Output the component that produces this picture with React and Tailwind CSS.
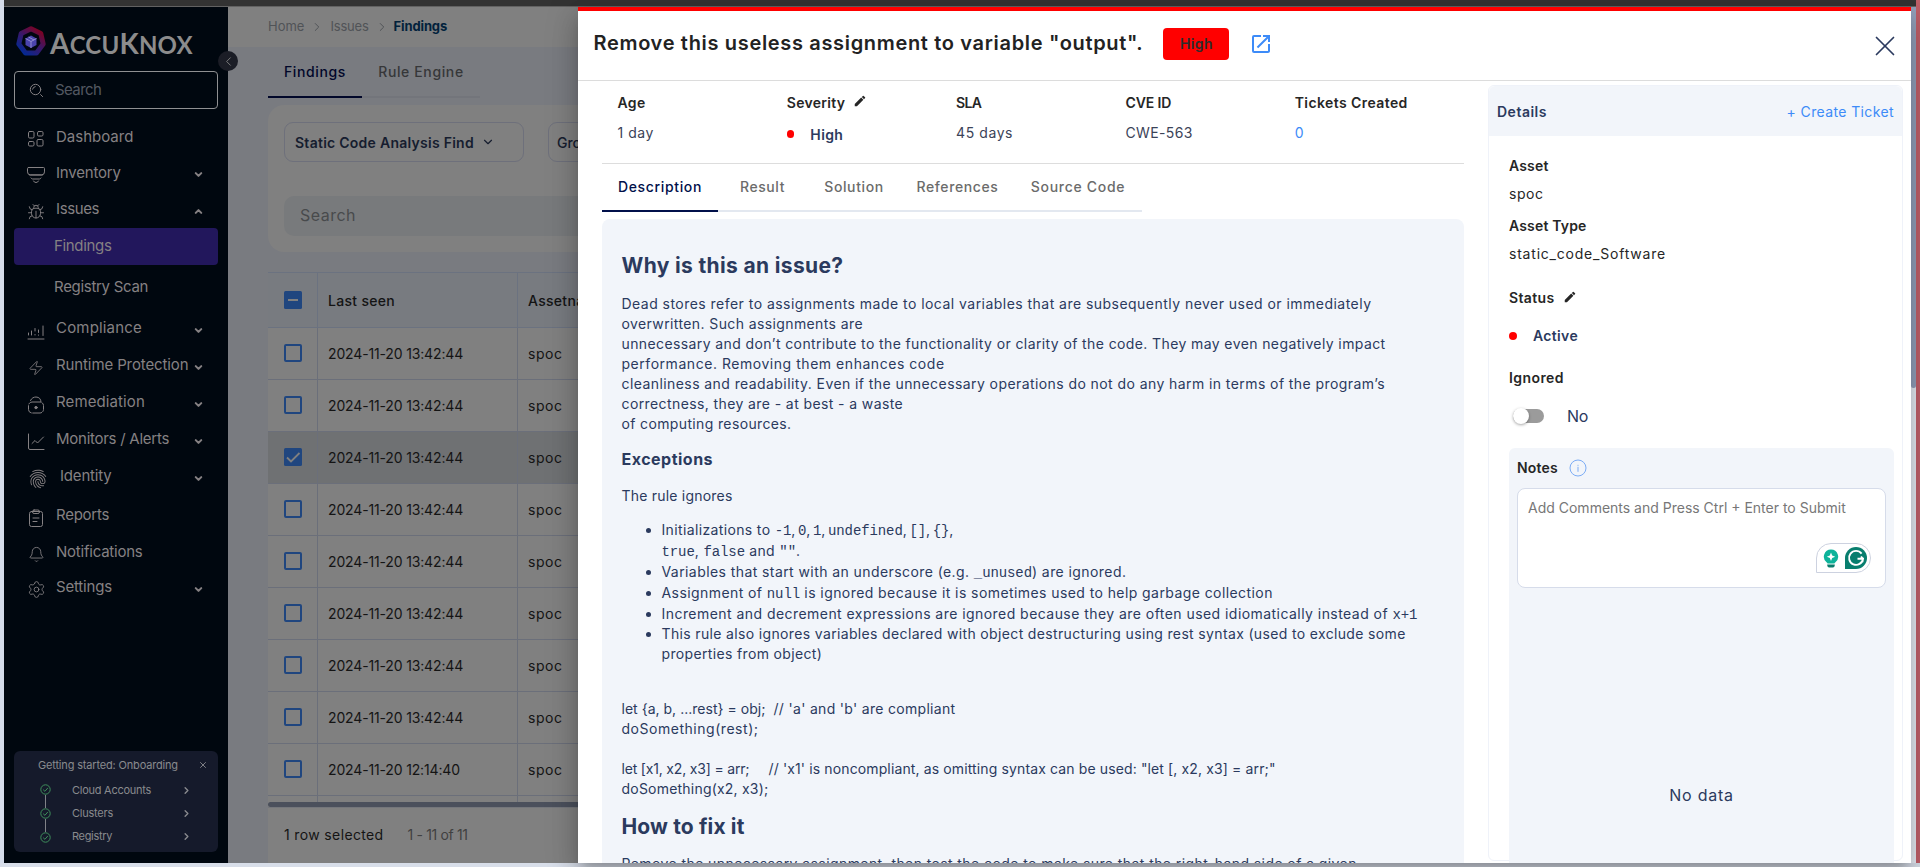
import React from "react";
import { Bell, Bug, ChevronDown, ChevronLeft, ChevronRight, ChevronUp, Settings, X, Zap } from "lucide-react";
import { MdEdit, MdFingerprint, MdOpenInNew } from "react-icons/md";

/* ---------- sidebar icons ---------- */

function Glyph({ children, size = 18 }) {
  return (
    <svg width={size} height={size} viewBox="0 0 18 18" fill="none" stroke="currentColor" strokeWidth="1" strokeLinecap="round" strokeLinejoin="round">
      {children}
    </svg>
  );
}

const SearchGlyph = () => (
  <svg width="15" height="15" viewBox="0 0 15 15" fill="none" stroke="currentColor" strokeWidth="1" strokeLinecap="round">
    <circle cx="6.5" cy="6.5" r="5.2" />
    <path d="M3.6 6.2a3 3 0 0 1 2.6-2.6M11.6 11.6l2 2" />
  </svg>
);

const DashboardGlyph = () => (
  <Glyph>
    <rect x="1.5" y="1.5" width="5.5" height="6.5" rx="1.2" />
    <rect x="10.5" y="1.5" width="5.5" height="4.5" rx="1.2" />
    <rect x="1.5" y="11.5" width="5.5" height="4.5" rx="1.2" />
    <rect x="10" y="9.5" width="6" height="6.5" rx="1.2" />
  </Glyph>
);

const InventoryGlyph = () => (
  <Glyph>
    <path d="M1.500 1.500h15q1 0 1 1v3.400q0 3-3 3h-11q-3 0-3-3V2.500q0-1 1-1Z" />
    <path d="M2.500 9h13M4 12q.6 1 1.600 1h6.800q1 0 1.600-1M6.500 15q.6 1.500 2.500 1.500t2.500-1.500" />
  </Glyph>
);

const ComplianceGlyph = () => (
  <Glyph>
    <path d="M1.500 11v2M4.500 9v4M8 6.500v2.500M8 12.500v.5M11.500 8v2.500M11.500 13v.2M16 4v9.500" />
    <path d="M1 17h16" />
  </Glyph>
);

const LockGlyph = () => (
  <Glyph>
    <path d="M3.500 4.500C4.500 2 7 1 9 1c3.200 0 5 2.200 5 5" />
    <rect x="1.500" y="6" width="15" height="11" rx="3.500" strokeDasharray="9 1.500" />
    <circle cx="9" cy="11.600" r="1.200" fill="currentColor" />
  </Glyph>
);

const ChartGlyph = () => (
  <Glyph>
    <path d="M1.500 1v14q0 1.500 1.500 1.500h14" />
    <path d="M5 10.500 8 7.500l2.500 2.500 6-6" />
  </Glyph>
);

const ClipboardGlyph = () => (
  <Glyph>
    <rect x="2.500" y="2.500" width="13" height="15" rx="2" />
    <rect x="5.500" y="1" width="7" height="3.500" rx="1.600" />
    <path d="M6 9h6M6 12.500h4" />
  </Glyph>
);

const ICON = { size: 18, strokeWidth: 1.25 };

const NAV = [
  { label: "Dashboard", h: "h-[36px]", tr: "", icon: <DashboardGlyph /> },
  { label: "Inventory", h: "h-[36px]", tr: "tracking-[-0.2px]", icon: <InventoryGlyph />, caret: "down" },
  { label: "Issues", h: "h-[37px]", tr: "tracking-[-0.4px]", icon: <Bug {...ICON} />, caret: "up" },
  { label: "Findings", h: "h-[37px]", tr: "tracking-[-0.33px]", child: true, active: true },
  { label: "Registry Scan", h: "h-[45px]", tr: "tracking-[-0.3px]", child: true },
  { label: "Compliance", h: "h-[37px]", tr: "tracking-[0.18px]", icon: <ComplianceGlyph />, caret: "down" },
  { label: "Runtime Protection", h: "h-[37px]", tr: "tracking-[-0.11px]", icon: <Zap size={16} strokeWidth={1.25} />, caret: "down" },
  { label: "Remediation", h: "h-[37px]", tr: "tracking-[0.11px]", icon: <LockGlyph />, caret: "down" },
  { label: "Monitors / Alerts", h: "h-[37px]", tr: "tracking-[-0.26px]", icon: <ChartGlyph />, caret: "down" },
  { label: "Identity", h: "h-[37px]", tr: "tracking-[-0.18px]", wide: true, icon: <MdFingerprint size={22} className="shrink-0" />, caret: "down" },
  { label: "Reports", h: "h-[41px]", tr: "tracking-[-0.27px]", icon: <ClipboardGlyph /> },
  { label: "Notifications", h: "h-[33px]", tr: "tracking-[-0.23px]", icon: <Bell size={17} strokeWidth={1.25} /> },
  { label: "Settings", h: "h-[37px]", tr: "tracking-[-0.18px]", icon: <Settings size={19} strokeWidth={1.1} />, caret: "down" },
];

function NavRow({ item }) {
  if (item.child) {
    return (
      <div className={`flex items-center rounded pl-[40px] ${item.h} ${item.tr} ${item.active ? "bg-[#22175c]" : ""}`}>
        {item.label}
      </div>
    );
  }
  return (
    <div className={`flex items-center pl-[12px] pr-[14px] ${item.h} ${item.tr}`}>
      <span className={`mt-1 flex w-5 shrink-0 items-center justify-center ${item.wide ? "mr-[12px] ml-[2px]" : "mr-[10px]"}`}>{item.icon}</span>
      <span className="flex-1 whitespace-nowrap">{item.label}</span>
      {item.caret === "down" && <ChevronDown size={11} strokeWidth={4.500} className="mt-[3px]" />}
      {item.caret === "up" && <ChevronUp size={11} strokeWidth={4.500} className="mt-[3px]" />}
    </div>
  );
}

function Logo() {
  return (
    <div className="flex h-[58px] items-center pl-[2px]">
      <svg width="30" height="31" viewBox="0 0 30 31" fill="none">
        <defs>
          <linearGradient id="ring" x1="24" y1="2" x2="5" y2="27" gradientUnits="userSpaceOnUse">
            <stop offset="0" stopColor="#85001a" />
            <stop offset=".5" stopColor="#3a1768" />
            <stop offset="1" stopColor="#002a96" />
          </linearGradient>
        </defs>
        <path d="M15 2.800 24.800 7.500 27.200 18 20.500 27H9.500L2.800 18 5.200 7.500Z" stroke="url(#ring)" strokeWidth="5" strokeLinejoin="round" />
        <path d="m15 9.500 5.500 3v6.500L15 22l-5.500-3v-6.500Z" fill="#4a44ad" />
        <path d="m9.500 12.500 5.500 3 5.500-3M15 15.500V22M12.500 11l5.500 3" stroke="#a5a0d8" strokeWidth=".8" />
      </svg>
      <div className="mt-[3px] ml-[4px] flex items-baseline font-['Lato',sans-serif] text-[24px] leading-none font-bold tracking-[0.2px] text-[#8c8c8c]">
        <span className="text-[28px]">A</span>
        <span>CCU</span>
        <span className="text-[28px]">K</span>
        <span>NOX</span>
      </div>
    </div>
  );
}

function CheckRing() {
  return (
    <svg width="11" height="11" viewBox="0 0 11 11" fill="none" stroke="#3f8f5c" strokeWidth="1" className="shrink-0">
      <circle cx="5.500" cy="5.500" r="4.700" />
      <path d="m3.200 5.700 1.700 1.600 3-3.400" />
    </svg>
  );
}

function Onboarding() {
  const steps = [
    ["Cloud Accounts", "tracking-[-0.26px]"],
    ["Clusters", "tracking-[-0.23px]"],
    ["Registry", "tracking-[-0.33px]"],
  ];
  return (
    <div className="mb-[11px] h-[101px] rounded-md bg-[#151a2b] px-[15px] pt-[5px] text-[11px] text-[#898a8e]">
      <div className="-mr-[5px] flex h-[18px] items-center justify-between pl-[9px] tracking-[-0.17px]">
        Getting started: Onboarding
        <X size={10} strokeWidth={2.200} />
      </div>
      <div className="mt-[5px] flex">
        <div className="ml-[11px] flex flex-col items-center pt-[5px]">
          <CheckRing />
          <span className="h-[13px] w-px bg-[#808288]" />
          <CheckRing />
          <span className="h-[13px] w-px bg-[#808288]" />
          <CheckRing />
        </div>
        <div className="ml-[21px] flex-1">
          {steps.map(([label, tr]) => (
            <div key={label} className={`flex h-[23px] items-center justify-between pr-[11px] ${tr}`}>
              {label}
              <ChevronRight size={11} strokeWidth={3} />
            </div>
          ))}
        </div>
      </div>
    </div>
  );
}

function Sidebar() {
  return (
    <aside className="relative flex w-[224px] shrink-0 flex-col bg-[#00070f] px-[10px] pt-[5px] text-[15px] text-[#858183]">
      <Logo />
      <div className="mt-[1px] flex h-[38px] items-center rounded border border-[#8f9092] pl-[14px]">
        <SearchGlyph />
        <span className="ml-[11px] tracking-[-0.6px] text-[#535861]">Search</span>
      </div>
      <nav className="mt-[10px] flex-1">
        {NAV.map((item) => (
          <NavRow key={item.label} item={item} />
        ))}
      </nav>
      <Onboarding />
      <button className="absolute top-[44px] -right-[10px] z-10 flex size-5 items-center justify-center rounded-full bg-[#1b1d26] text-[#808080]">
        <ChevronLeft size={15} strokeWidth={1.500} />
      </button>
    </aside>
  );
}

/* ---------- findings table behind the drawer ---------- */

function Checkbox({ state }) {
  if (state) {
    return (
      <svg width="18" height="18" viewBox="0 0 18 18" fill="none">
        <rect width="18" height="18" rx="1.500" fill="#20467f" />
        {state === "some" ? (
          <path d="M4 9h10" stroke="#808080" strokeWidth="2" />
        ) : (
          <path d="m3 9.500 4 4 8.500-8.500" stroke="#808080" strokeWidth="1.800" />
        )}
      </svg>
    );
  }
  return <span className="size-[18px] rounded-[2px] border-2 border-[#20467f]" />;
}

const ROWS = [
  "2024-11-20 13:42:44",
  "2024-11-20 13:42:44",
  "2024-11-20 13:42:44",
  "2024-11-20 13:42:44",
  "2024-11-20 13:42:44",
  "2024-11-20 13:42:44",
  "2024-11-20 13:42:44",
  "2024-11-20 13:42:44",
  "2024-11-20 12:14:40",
];

function Main() {
  return (
    <main className="flex w-[350px] shrink-0 flex-col overflow-hidden bg-[#797b80] whitespace-nowrap">
      <div className="flex h-[40px] items-center bg-[#808080] pl-[40px] text-[13px] text-[#505357]">
        <span>Home</span>
        <ChevronRight size={14} strokeWidth={1.700} className="mx-[6px]" />
        <span className="tracking-[-0.2px]">Issues</span>
        <ChevronRight size={14} strokeWidth={1.700} className="mr-[5px] ml-[6px]" />
        <span className="font-bold tracking-[-0.13px] text-[#02223c]">Findings</span>
      </div>

      <div className="ml-[40px] flex h-[51px] w-[212px] border-b-2 border-[#73757b] text-[14px] font-medium tracking-[0.62px]">
        <div className="box-content flex h-[49px] w-[94px] items-center justify-center border-b-2 border-[#01072a] text-[#01072a]">Findings</div>
        <div className="flex h-[49px] flex-1 items-center justify-center text-[#363739]">Rule Engine</div>
      </div>

      <div className="mt-[7px] ml-[40px] h-[147px] rounded-l-2xl bg-[#808080] pt-[17px] pl-[16px]">
        <div className="flex gap-[24px]">
          <div className="flex h-[40px] w-[240px] shrink-0 items-center rounded-[9px] border border-[#6e707b] pl-[10px] text-[14px] font-semibold tracking-[0.26px] text-[#161d2f]">
            Static Code Analysis Find
            <ChevronDown size={14} strokeWidth={2} className="ml-[7px]" />
          </div>
          <div className="flex h-[40px] w-[240px] shrink-0 items-center rounded-[9px] border border-[#6e707b] pl-[8px] text-[14px] font-medium text-[#161d2f]">
            Group by
          </div>
        </div>
        <div className="mt-[34px] flex h-[40px] items-center rounded-l-[10px] bg-[#787a7c] pb-[2px] pl-[16px] text-[16px] tracking-[0.48px] text-[#484a4c]">Search</div>
      </div>

      <div className="mt-[20px] ml-[40px] flex flex-1 flex-col bg-[#808080] text-[14px] text-[#141414]">
        <div className="flex h-[56px] w-[400px] border-y border-[#6b7280] bg-[#787b80] font-medium">
          <div className="flex w-[50px] shrink-0 items-center border-r border-[#6b7280] pl-[16px]"><Checkbox state="some" /></div>
          <div className="flex w-[200px] shrink-0 items-center border-r border-[#6b7280] pl-[10px] tracking-[0.3px]">Last seen</div>
          <div className="flex items-center pl-[10px] tracking-[0.3px]">Assetname</div>
        </div>
        {ROWS.map((seen, i) => (
          <div key={i} className={`flex h-[52px] border-b border-[#6b6f7a] ${i === 2 ? "bg-[#6f7173]" : ""}`}>
            <div className="flex w-[50px] items-center border-r border-[#6b6f7a] pb-[1px] pl-[16px]"><Checkbox state={i === 2 ? "all" : ""} /></div>
            <div className="flex w-[200px] items-center border-r border-[#6b6f7a] pb-[1px] pl-[10px] tracking-[-0.15px]">{seen}</div>
            <div className="flex items-center pb-[1px] pl-[10px] tracking-[0.54px]">spoc</div>
          </div>
        ))}
        <div className="flex h-[6px]">
          <div className="w-[50px] border-r border-[#6b6f7a]" />
          <div className="w-[200px] border-r border-[#6b6f7a]" />
        </div>
        <div className="h-[5px] rounded-l bg-[#4b505c]" />
        <div className="flex flex-1 items-center border-t border-[#74767b] pb-[2px] pl-[16px]">
          <span className="tracking-[0.36px]">1 row selected</span>
          <span className="ml-[24px] tracking-[-0.35px] text-[#404040]">1 - 11 of 11</span>
        </div>
      </div>
    </main>
  );
}

/* ---------- drawer ---------- */

function Stat({ label, tr, children }) {
  return (
    <div className="w-[169.300px]">
      <div className={`flex h-[20px] items-center font-semibold text-[#262626] ${tr}`}>{label}</div>
      <div className="mt-[10px] flex h-[20px] items-center text-[#3b4358]">{children}</div>
    </div>
  );
}

const Code = ({ children }) => <code className="font-['Liberation_Mono',monospace] text-[14px] leading-[0] tracking-[-0.1px]">{children}</code>;

function Description() {
  return (
    <div className="mt-[7px] flex-1 overflow-hidden rounded-t-lg bg-[#f2f5fa] pt-[31px] pl-[19.500px] text-[14px] leading-[20px] whitespace-nowrap text-[#2b3a5e]">
      <h2 className="text-[21px] leading-[32px] font-bold tracking-[0.35px]">Why is this an issue?</h2>
      <div className="mt-[12px]">
        <p className="tracking-[0.465px]">Dead stores refer to assignments made to local variables that are subsequently never used or immediately</p>
        <p className="tracking-[0.39px]">overwritten. Such assignments are</p>
        <p className="tracking-[0.393px]">unnecessary and don’t contribute to the functionality or clarity of the code. They may even negatively impact</p>
        <p className="tracking-[0.54px]">performance. Removing them enhances code</p>
        <p className="tracking-[0.421px]">cleanliness and readability. Even if the unnecessary operations do not do any harm in terms of the program’s</p>
        <p className="tracking-[0.4px]">correctness, they are - at best - a waste</p>
        <p className="tracking-[0.36px]">of computing resources.</p>
      </div>
      <h3 className="mt-[13px] text-[16px] leading-[24px] font-bold tracking-[0.49px]">Exceptions</h3>
      <p className="mt-[15px] tracking-[0.21px]">The rule ignores</p>
      <ul className="mt-[13px] list-disc pl-[40px] leading-[21px] tracking-[0.36px]">
        <li>
          Initializations to{" "}
          <span className="tracking-[-0.4px] [word-spacing:-0.5px]">
            <Code>-1</Code>, <Code>0</Code>, <Code>1</Code>, <Code>undefined</Code>, <Code>[]</Code>, <Code>{"{}"}</Code>,
          </span>
          <br />
          <Code>true</Code>, <Code>false</Code> and <Code>""</Code>.
        </li>
        <li className="tracking-[0.42px]">Variables that start with an underscore (e.g. <Code>_unused</Code>) are ignored.</li>
        <li className="tracking-[0.42px]">Assignment of <Code>null</Code> is ignored because it is sometimes used to help garbage collection</li>
        <li className="tracking-[0.45px]">Increment and decrement expressions are ignored because they are often used idiomatically instead of <Code>x+1</Code></li>
        <li className="leading-[20px] tracking-[0.35px]">
          This rule also ignores variables declared with object destructuring using rest syntax (used to exclude some
          <br />
          properties from object)
        </li>
      </ul>
      <div className="mt-[35px] whitespace-pre">
        <p className="flex"><span className="w-[152px] tracking-[0.02px]">{"let {a, b, ...rest} = obj;"}</span><span className="tracking-[0.31px]">// 'a' and 'b' are compliant</span></p>
        <p className="tracking-[0.53px]">doSomething(rest);</p>
        <p className="mt-[20px] flex"><span className="w-[147px] tracking-[-0.18px]">let [x1, x2, x3] = arr;</span><span className="tracking-[0.127px]">// 'x1' is noncompliant, as omitting syntax can be used: "let [, x2, x3] = arr;"</span></p>
        <p className="tracking-[0.21px]">doSomething(x2, x3);</p>
      </div>
      <h2 className="mt-[12px] text-[21px] leading-[32px] font-bold tracking-[0.14px]">How to fix it</h2>
      <p className="mt-[11px] tracking-[0.42px]">Remove the unnecessary assignment, then test the code to make sure that the right-hand side of a given</p>
    </div>
  );
}

const TABS = [
  ["Description", "w-[116px] tracking-[0.65px] border-[#01104a] text-[#01104a]"],
  ["Result", "w-[89px] tracking-[0.57px] border-[#e3e8f0] text-[#6b6b6b]"],
  ["Solution", "w-[94px] tracking-[0.61px] border-[#e3e8f0] text-[#6b6b6b]"],
  ["References", "w-[113px] tracking-[0.61px] border-[#e3e8f0] text-[#6b6b6b]"],
  ["Source Code", "w-[128px] tracking-[0.7px] border-[#e3e8f0] text-[#6b6b6b]"],
];

function GrammarBadge() {
  return (
    <div className="flex h-[30px] w-[55px] items-center justify-center gap-[6px] rounded-[15px] rounded-bl-none border border-[#cdd2e0] bg-white pl-[2px]">
      <svg width="16" height="19" viewBox="0 0 16 19">
        <path d="M8 .5a7.200 7.200 0 0 1 4.200 13c-.5.400-.7.500-.7 1h-7c0-.5-.2-.6-.7-1A7.200 7.200 0 0 1 8 .5Z" fill="#0db39a" />
        <path d="M8 3.500 9.200 6.600 12.200 7.800 9.200 9 8 12 6.800 9 3.800 7.800 6.800 6.600Z" fill="#fff" />
        <path d="M4.200 15.500h7.600q0 3-2 3H6.200q-2 0-2-3Z" fill="#0a7d6c" />
      </svg>
      <svg width="22" height="22" viewBox="0 0 22 22" fill="none">
        <path d="M11 0a11 11 0 1 1 0 22H0V11A11 11 0 0 1 11 0Z" fill="#087e6e" />
        <path d="M16.600 6.600A7 7 0 1 0 18 11.800h-5.500M16 9.500l2 2.300-.6 3.400" stroke="#fff" strokeWidth="1.900" />
      </svg>
    </div>
  );
}

function Details() {
  return (
    <section className="mt-[4px] mr-[8px] mb-[2px] ml-[24px] flex flex-1 flex-col rounded-md border border-[#eff2f9] text-[14px] text-[#262626]">
      <div className="flex h-[50px] shrink-0 items-center justify-between rounded-t-md bg-[#f2f5fa] px-[8px]">
        <span className="font-semibold tracking-[0.5px] text-[#2b3a5e]">Details</span>
        <span className="tracking-[0.38px] text-[#3d8bf8]">+ Create Ticket</span>
      </div>
      <div className="flex flex-1 flex-col pt-[20px] pr-[8px] pl-[20px] leading-[20px]">
        <div className="font-semibold tracking-[0.16px]">Asset</div>
        <div className="mt-[8px] tracking-[0.54px]">spoc</div>
        <div className="mt-[12px] font-semibold tracking-[0.17px]">Asset Type</div>
        <div className="mt-[8px] tracking-[0.79px]">static_code_Software</div>
        <div className="mt-[24px] flex items-center font-semibold tracking-[0.36px]">
          Status
          <MdEdit size={14} className="mb-[3px] ml-[8px]" />
        </div>
        <div className="mt-[18px] flex items-center font-semibold tracking-[0.34px] text-[#2b3a5e]">
          <span className="mr-[16px] size-[8px] rounded-full bg-[#ff0000]" />
          Active
        </div>
        <div className="mt-[22px] font-semibold tracking-[0.43px]">Ignored</div>
        <div className="mt-[18px] flex items-center pl-[4px]">
          <span className="flex h-[14px] w-[31px] items-center rounded-full bg-[#9b9b9b]">
            <span className="size-[16px] shrink-0 rounded-full bg-white shadow-[0_1px_3px_rgba(0,0,0,0.35)]" />
          </span>
          <span className="ml-[23px] text-[16px] tracking-[-0.32px] text-[#2b3a5e]">No</span>
        </div>
        <div className="-mb-[3px] mt-[22px] flex flex-1 flex-col rounded-t-md bg-[#f2f5fa] px-[8px] pt-[10px]">
          <div className="flex items-center font-semibold tracking-[0.21px]">
            Notes
            <svg width="18" height="18" viewBox="0 0 18 18" fill="none" stroke="#7cacf5" className="ml-[11px]">
              <circle cx="9" cy="9" r="8" />
              <path d="M9 7.800v5M9 5.800v1" />
            </svg>
          </div>
          <div className="mt-[10px] flex h-[100px] flex-col rounded-lg border border-[#d6dcea] bg-white pt-[9px] pl-[10px]">
            <span className="text-[#777777]">Add Comments and Press Ctrl + Enter to Submit</span>
            <div className="mt-[25px] mr-[14px] self-end"><GrammarBadge /></div>
          </div>
          <div className="mt-[197px] text-center text-[16px] tracking-[0.75px] text-[#2b3a5e]">No data</div>
        </div>
      </div>
    </section>
  );
}

function Drawer() {
  return (
    <div className="z-20 flex w-[1333px] shrink-0 flex-col bg-white text-[14px] shadow-[0_8px_10px_-5px_rgba(0,0,0,0.2),0_16px_24px_2px_rgba(0,0,0,0.14),0_6px_30px_5px_rgba(0,0,0,0.12)]">
      <header className="flex h-[74px] shrink-0 items-center border-t-4 border-b border-t-[#ff0000] border-b-[#dcdcdc] pr-[16px] pb-[4px] pl-[15.500px]">
        <h1 className="pb-[1px] text-[20px] font-semibold tracking-[0.67px] whitespace-nowrap text-[#222222]">Remove this useless assignment to variable "output".</h1>
        <span className="ml-[20px] flex h-[32px] w-[66px] items-center justify-center rounded bg-[#ff0000] font-semibold tracking-[0.39px] text-[#2d2d2d]">High</span>
        <MdOpenInNew size={24} className="ml-[20px] text-[#3d8bf8]" />
        <X size={34} strokeWidth={1.200} className="-mr-[7px] mt-[4px] ml-auto text-[#2b3a5e]" />
      </header>
      <div className="flex min-h-0 flex-1">
        <div className="ml-[24px] flex w-[862px] shrink-0 flex-col">
          <div className="flex h-[83px] border-b border-[#dddddd] pt-[11px] pl-[15.500px]">
            <Stat label="Age" tr="tracking-[0.33px]"><span className="tracking-[0.55px]">1 day</span></Stat>
            <Stat label={<>Severity<MdEdit size={14} className="mb-[3px] ml-[8px]" /></>} tr="tracking-[0.29px]">
              <span className="mt-[4px] mr-[16px] size-[7.500px] rounded-full bg-[#ff0000]" />
              <span className="mt-[4px] font-semibold tracking-[0.39px] text-[#2b3a5e]">High</span>
            </Stat>
            <Stat label="SLA" tr="tracking-[-0.7px]"><span className="tracking-[0.57px]">45 days</span></Stat>
            <Stat label="CVE ID" tr="tracking-[-0.08px]"><span className="tracking-[0.4px]">CWE-563</span></Stat>
            <Stat label="Tickets Created" tr="tracking-[0.41px]"><span className="text-[#3d8bf8]">0</span></Stat>
          </div>
          <div className="flex h-[48px] font-medium">
            {TABS.map(([label, cls]) => (
              <div key={label} className={`flex items-center justify-center border-b-2 pb-[2px] ${cls}`}>{label}</div>
            ))}
          </div>
          <Description />
        </div>
        <Details />
      </div>
    </div>
  );
}

export default function App() {
  return (
    <div className="flex h-[867px] w-[1920px] flex-col overflow-hidden bg-[#d8dee9] font-['Inter',sans-serif]">
      <div className="flex h-[863px]">
        <div className="w-[4px] shrink-0 bg-[#d5dcea]" />
        <div className="flex w-[1912px] shrink-0 flex-col">
          <div className="h-[7px] shrink-0 border-b border-[#626262] bg-[#333333]" />
          <div className="flex min-h-0 flex-1">
            <Sidebar />
            <Main />
            <Drawer />
            <div className="flex-1 bg-[#e8edf6]">
              <div className="h-[381px] w-full rounded-b bg-[#94a1bc]" />
            </div>
          </div>
        </div>
        <div className="w-[4px] shrink-0 bg-[#c05f69]" />
      </div>
    </div>
  );
}
